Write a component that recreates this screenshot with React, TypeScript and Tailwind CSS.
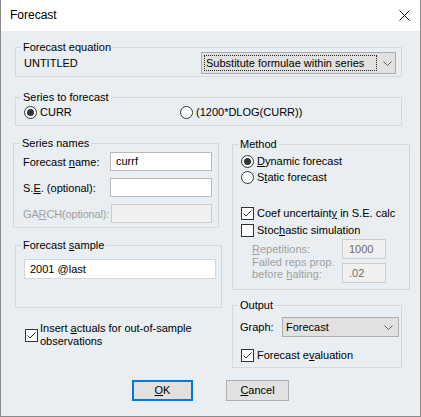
import React from "react"

function U({ children }: { children: React.ReactNode }) {
  return <span className="underline underline-offset-[1px] decoration-1">{children}</span>
}

function Radio({ checked, label }: { checked?: boolean; label: React.ReactNode }) {
  return (
    <div className="flex items-center h-[16px]">
      <span className="w-[13px] h-[13px] rounded-full border border-[#333] bg-white flex items-center justify-center shrink-0">
        {checked && <span className="w-[7px] h-[7px] rounded-full bg-[#333]" />}
      </span>
      <span className="ml-[3px] whitespace-nowrap">{label}</span>
    </div>
  )
}

function Check({ checked }: { checked?: boolean }) {
  return (
    <span className="w-[13px] h-[13px] border border-[#333] bg-white flex items-center justify-center shrink-0">
      {checked && (
        <svg width="11" height="11" viewBox="0 0 11 11">
          <path d="M1.5 5.5 L4 8 L9.5 2.5" fill="none" stroke="#333" strokeWidth="1" />
        </svg>
      )}
    </span>
  )
}

function Chevron() {
  return (
    <svg width="9" height="5" viewBox="0 0 9 5">
      <path d="M0.5 0.5 L4.5 4.5 L8.5 0.5" fill="none" stroke="#606060" strokeWidth="1" />
    </svg>
  )
}

function Group({
  title,
  className,
  legendClass = "ml-[5px]",
  children,
}: {
  title: React.ReactNode
  className?: string
  legendClass?: string
  children: React.ReactNode
}) {
  return (
    <fieldset className={`border border-[#d3d9dc] ${className ?? ""}`}>
      <legend className={`${legendClass} px-[2px] leading-[12px]`}>{title}</legend>
      {children}
    </fieldset>
  )
}

export default function App() {
  return (
    <div
      className="w-[421px] h-[417px] flex flex-col border-l border-r border-b border-[#8a8a8a] bg-[#e8eef1] text-black text-[11px] leading-[13px]"
      style={{ fontFamily: '"Liberation Sans", Arial, sans-serif' }}
    >
      {/* title bar */}
      <div className="h-[31px] shrink-0 bg-white flex items-center justify-between pl-[9px] pr-[10px]">
        <span className="text-[12px]">Forecast</span>
        <svg width="11" height="11" viewBox="0 0 11 11">
          <path d="M0.5 0.5 L10.5 10.5 M10.5 0.5 L0.5 10.5" stroke="#111" strokeWidth="1" />
        </svg>
      </div>

      <div className="flex-1 pl-[14px] pt-[10px]">
        <Group title="Forecast equation" className="w-[387px]">
          <div className="flex items-center justify-between h-[22px] -mt-[1px] mb-[2px] pl-[8px] pr-[5px]">
            <span>UNTITLED</span>
            <div className="w-[195px] h-[22px] bg-[#e1e1e1] border border-[#adadad] flex items-stretch">
              <div className="flex-1 m-[2px] border border-dotted border-[#222] flex items-center pl-[1px] whitespace-nowrap">
                Substitute formulae within series
              </div>
              <div className="w-[16px] flex items-center justify-center">
                <Chevron />
              </div>
            </div>
          </div>
        </Group>

        <Group title="Series to forecast" className="w-[387px] mt-[14px]">
          <div className="flex h-[16px] mt-[1px] mb-[5px] pl-[8px]">
            <div className="w-[156px]">
              <Radio checked label="CURR" />
            </div>
            <Radio label="(1200*DLOG(CURR))" />
          </div>
        </Group>

        <div className="flex mt-[11px]">
          <div className="w-[217px] shrink-0">
            <Group title="Series names" legendClass="ml-[6px]" className="w-[206px] -ml-[2px]">
              <div className="flex flex-col gap-[7px] mt-[3px] mb-[4px] pl-[9px] pr-[6px]">
                <div className="flex items-center justify-between h-[19px]">
                  <span className="mt-[2px] whitespace-nowrap">
                    Forecast <U>n</U>ame:
                  </span>
                  <div className="w-[102px] h-[19px] shrink-0 bg-white border border-[#b9b9b9] flex items-center pl-[5px]">
                    currf
                  </div>
                </div>
                <div className="flex items-center justify-between h-[19px]">
                  <span className="mt-[2px] whitespace-nowrap">
                    S.<U>E</U>. (optional):
                  </span>
                  <div className="w-[102px] h-[19px] shrink-0 bg-white border border-[#b9b9b9]" />
                </div>
                <div className="flex items-center justify-between h-[19px]">
                  <span className="mt-[2px] whitespace-nowrap text-[#a0a0a0] tracking-[-0.15px]">
                    GA<U>R</U>CH(optional):
                  </span>
                  <div className="w-[101px] h-[19px] shrink-0 bg-[#f0f0f0] border border-[#cccccc]" />
                </div>
              </div>
            </Group>

            <Group title={<>Forecast <U>s</U>ample</>} className="w-[207px] mt-[11px]">
              <div className="mt-[8px] mb-[28px] pl-[8px] pr-[5px]">
                <div className="h-[20px] bg-white border border-[#d6d6d6] flex items-center pl-[5px]">
                  2001 @last
                </div>
              </div>
            </Group>

            <div className="flex items-center mt-[14px] ml-[10px]">
              <Check checked />
              <span className="ml-[2px] leading-[13px]">
                Insert <U>a</U>ctuals for out-of-sample
                <br />
                observations
              </span>
            </div>
          </div>

          <div className="w-[170px] mt-[1px] shrink-0">
            <Group title="Method" className="w-[170px]">
              <div className="mt-[3px] mb-[6px] pl-[8px] pr-[14px]">
                <Radio checked label={<><U>D</U>ynamic forecast</>} />
                <Radio label={<>S<U>t</U>atic forecast</>} />
                <div className="flex items-center h-[17px] mt-[20px]">
                  <Check checked />
                  <span className="ml-[3px] whitespace-nowrap">
                    Coef uncertaint<U>y</U> in S.E. calc
                  </span>
                </div>
                <div className="flex items-center h-[17px]">
                  <Check />
                  <span className="ml-[3px] whitespace-nowrap">
                    Stoc<U>h</U>astic simulation
                  </span>
                </div>
                <div className="flex items-center h-[20px] pl-[11px] text-[#a0a0a0]">
                  <span className="w-[90px]">
                    <U>R</U>epetitions:
                  </span>
                  <div className="w-[44px] h-[20px] bg-[#f0f0f0] border border-[#cccccc] flex items-center pl-[6px] text-[#6d6d6d]">
                    1000
                  </div>
                </div>
                <div className="flex items-start h-[20px] mt-[4px] pl-[11px] text-[#a0a0a0]">
                  <span className="w-[90px] -mt-[7px] leading-[12px]">
                    Failed reps prop.
                    <br />
                    before <U>h</U>alting:
                  </span>
                  <div className="w-[44px] h-[20px] bg-[#f0f0f0] border border-[#cccccc] flex items-center pl-[6px] text-[#6d6d6d]">
                    .02
                  </div>
                </div>
              </div>
            </Group>

            <Group title="Output" className="w-[170px] mt-[9px]">
              <div className="mt-[6px] mb-[3px] pl-[7px] pr-[2px]">
                <div className="flex items-center h-[20px]">
                  <span className="w-[42px]">Graph:</span>
                  <div className="w-[117px] h-[20px] bg-[#e1e1e1] border border-[#adadad] flex items-center justify-between pl-[3px] pr-[5px]">
                    <span>Forecast</span>
                    <Chevron />
                  </div>
                </div>
                <div className="flex items-center h-[17px] mt-[10px] pl-[1px]">
                  <Check checked />
                  <span className="ml-[3px] whitespace-nowrap">
                    Forecast e<U>v</U>aluation
                  </span>
                </div>
              </div>
            </Group>
          </div>
        </div>

        <div className="flex mt-[12px] ml-[117px]">
          <button className="w-[61px] h-[21px] bg-[#e1e1e1] border-2 border-[#0078d7] flex items-center justify-center">
            <U>O</U>K
          </button>
          <button className="w-[63px] h-[21px] ml-[33px] bg-[#e1e1e1] border border-[#adadad] flex items-center justify-center">
            <U>C</U>ancel
          </button>
        </div>
      </div>
    </div>
  )
}
